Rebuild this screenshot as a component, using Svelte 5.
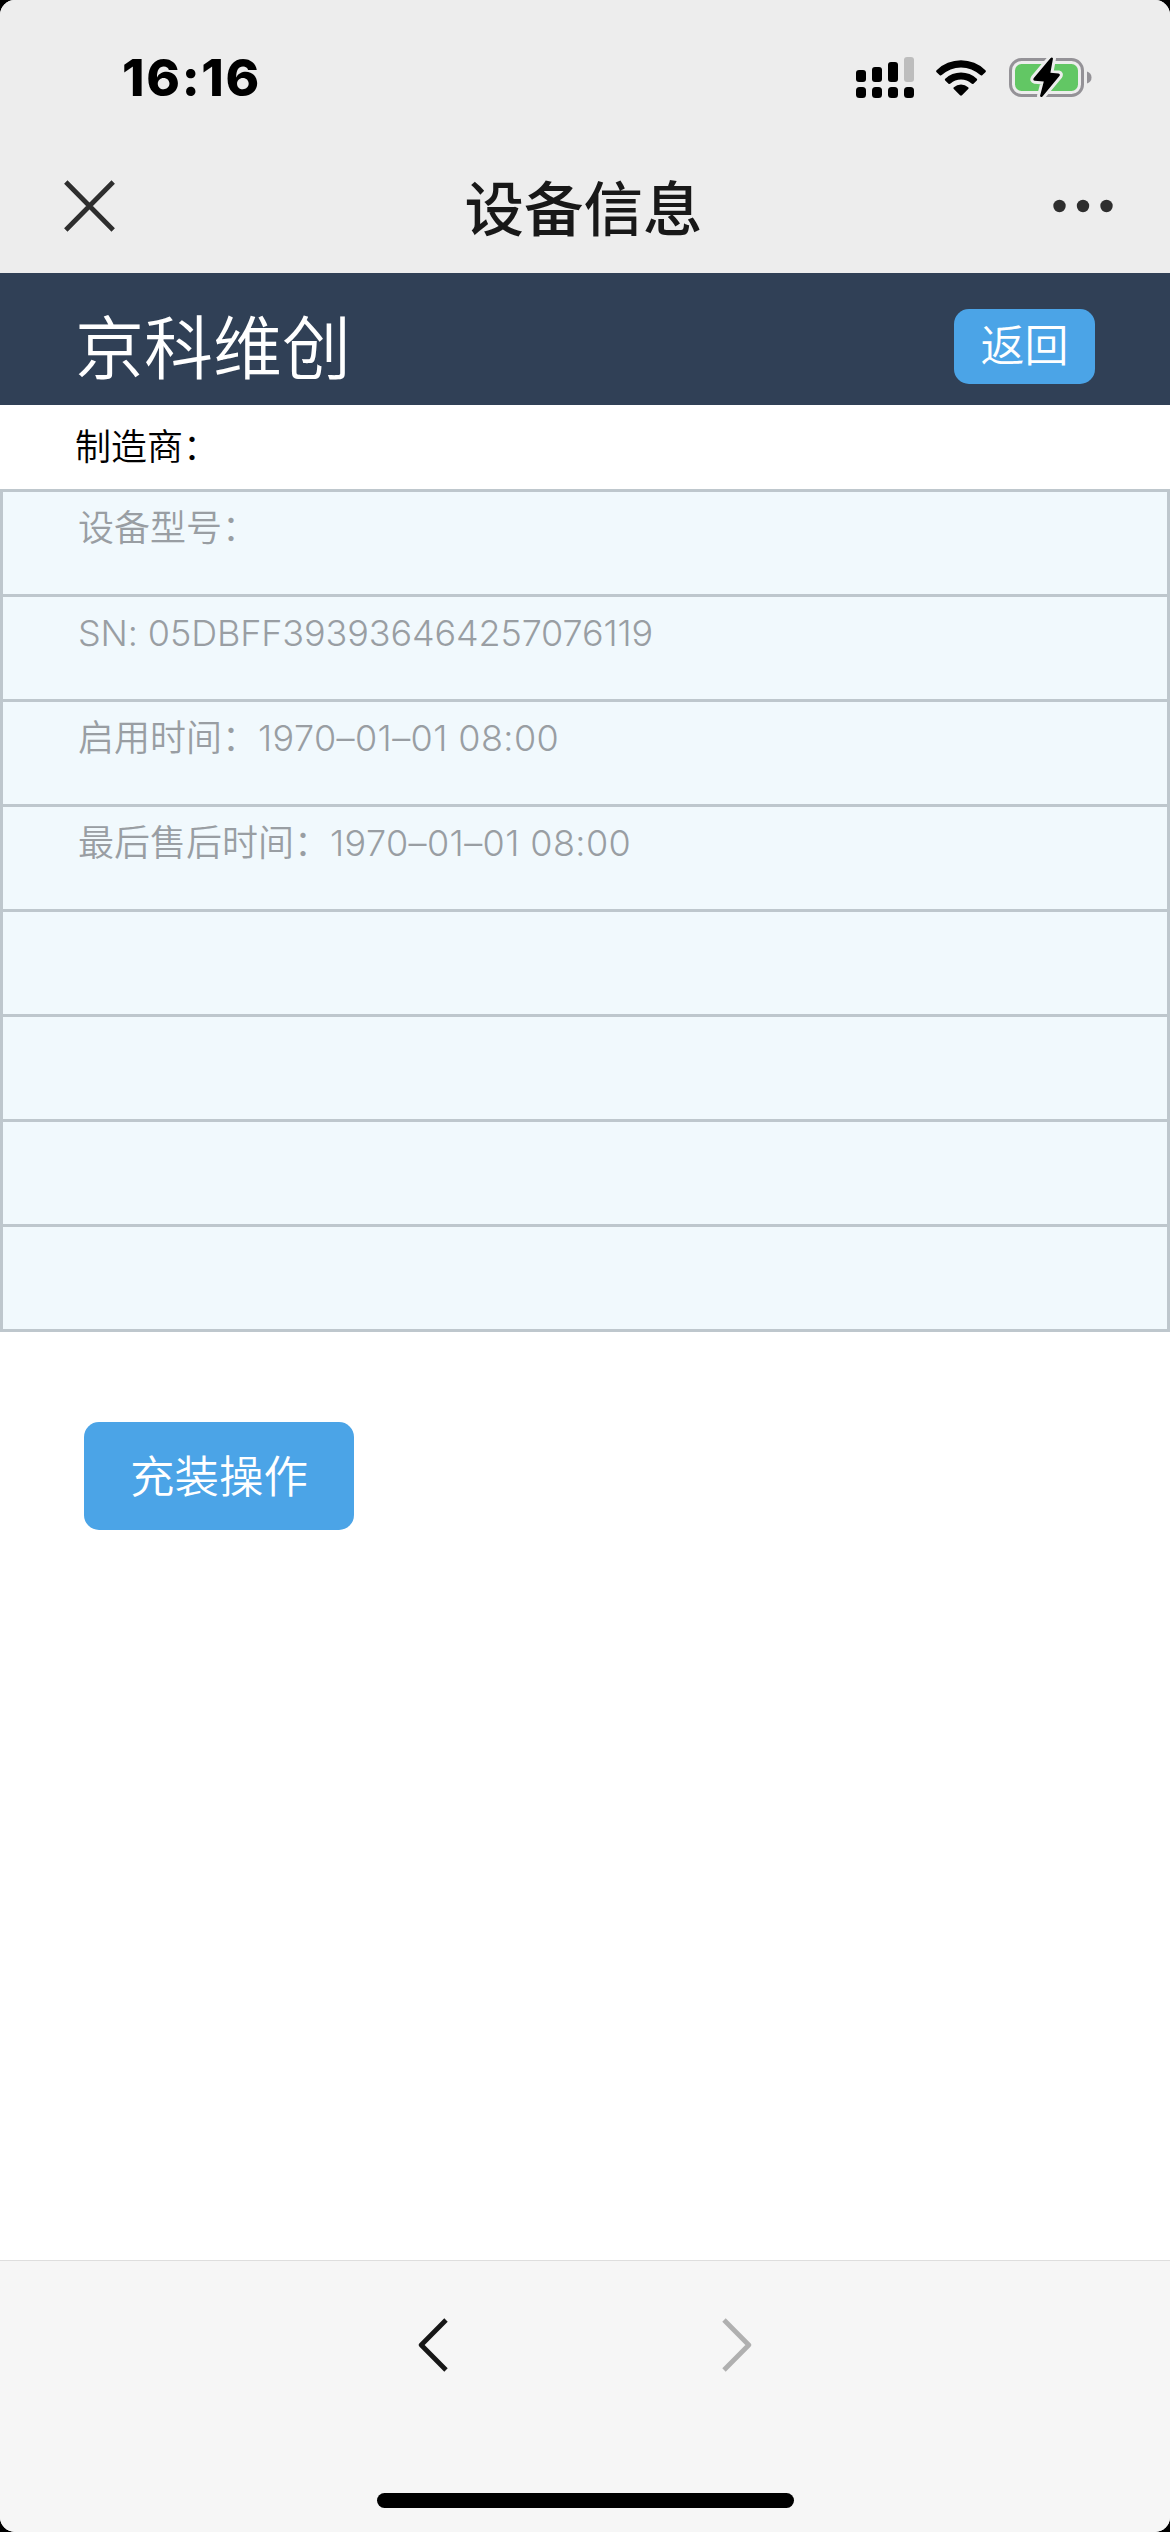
<script lang="ts">
  interface InfoRow {
    label: string;
    value: string;
    kind?: string;
  }

  const time: string = '16:16';
  const title: string = '设备信息';
  const company: string = '京科维创';

  // Rows without a label are kept as blank cells
  const rows: InfoRow[] = [
    { label: '设备型号：', value: '' },
    { label: '', value: 'SN: 05DBFF393936464257076119', kind: 'serial' },
    { label: '启用时间：', value: '1970–01–01 08:00', kind: 'date' },
    { label: '最后售后时间：', value: '1970–01–01 08:00', kind: 'date' },
    { label: '', value: '' },
    { label: '', value: '' },
    { label: '', value: '' },
    { label: '', value: '' }
  ];
</script>

<div class="frame">
  <div class="screen">
    <div class="top">
      <div class="status-bar">
        <span class="time">{time}</span>
        <div class="status-icons">
          <svg class="signal" width="58" height="41" viewBox="0 0 58 41">
            <rect x="0" y="13" width="10" height="12" rx="3" />
            <rect x="16" y="10" width="10" height="15" rx="3" />
            <rect x="32" y="5" width="10" height="20" rx="3" />
            <rect x="48" y="0" width="10" height="25" rx="3" fill="#bdbdbd" />
            <rect x="0" y="30" width="10" height="11" rx="3.5" />
            <rect x="16" y="30" width="10" height="11" rx="3.5" />
            <rect x="32" y="30" width="10" height="11" rx="3.5" />
            <rect x="48" y="30" width="10" height="11" rx="3.5" />
          </svg>
          <svg class="wifi" width="50" height="37" viewBox="0 0 50 37">
            <path d="M0.6 11.2A35 35 0 0 1 49.4 11.2Q50.4 12.2 49.4 13.2L46.2 16.2Q45.3 17 44.3 16.1A28 28 0 0 0 5.7 16.1Q4.7 17 3.8 16.2L0.6 13.2Q-0.4 12.2 0.6 11.2Z" />
            <path d="M9.2 19.7A23 23 0 0 1 40.8 19.7Q41.7 20.7 40.8 21.6L37.5 24.7Q36.5 25.5 35.5 24.6A15.6 15.6 0 0 0 14.5 24.6Q13.5 25.5 12.5 24.7L9.2 21.6Q8.3 20.7 9.2 19.7Z" />
            <path d="M17.9 28.2A11 11 0 0 1 32.1 28.2Q33.1 29 32.2 30L26 36.2Q25 37.1 24 36.2L17.8 30Q16.9 29 17.9 28.2Z" />
          </svg>
          <svg class="battery" width="83" height="43" viewBox="0 0 83 43">
            <rect x="1.5" y="3.5" width="72" height="36" rx="11" fill="none" stroke="#949297" stroke-width="3" />
            <rect x="6" y="8" width="63" height="27" rx="6.5" fill="#62c764" />
            <path d="M78 15.5Q82.5 17 82.5 21.5T78 27.5Z" fill="#949297" />
            <path
              d="M41.4 2.3Q43 .8 44 2.5L41.4 16.8L49.5 17.4Q51.7 18 50.4 20L33.7 40.2Q32 42 31 40L34.8 25.4L25.8 24.8Q23.4 24.3 24.8 22Z"
              stroke="#ededed"
              stroke-width="6"
              stroke-linejoin="round"
            />
            <path d="M41.4 2.3Q43 .8 44 2.5L41.4 16.8L49.5 17.4Q51.7 18 50.4 20L33.7 40.2Q32 42 31 40L34.8 25.4L25.8 24.8Q23.4 24.3 24.8 22Z" />
          </svg>
        </div>
      </div>

      <div class="nav-bar">
        <button class="icon-btn" aria-label="关闭">
          <svg width="51" height="52" viewBox="0 0 51 52" fill="none" stroke="#2e2e2e" stroke-width="4.8">
            <path d="M1.8 2L49.2 50M49.2 2L1.8 50" />
          </svg>
        </button>
        <h1>{title}</h1>
        <button class="icon-btn" aria-label="更多">
          <svg width="60" height="14" viewBox="0 0 60 14" fill="#2e2e2e">
            <circle cx="6.5" cy="7" r="6.2" />
            <circle cx="30" cy="7" r="6.2" />
            <circle cx="53.5" cy="7" r="6.2" />
          </svg>
        </button>
      </div>
    </div>

    <header class="company-bar">
      <span class="company">{company}</span>
      <button class="back-btn">返回</button>
    </header>

    <main>
      <div class="maker">制造商：</div>
      <div class="info-list">
        {#each rows as row}
          <div class="info-row">{row.label}<span class={row.kind}>{row.value}</span></div>
        {/each}
      </div>
      <button class="action-btn">充装操作</button>
    </main>

    <footer class="toolbar">
      <div class="arrows">
        <svg width="30" height="54" viewBox="0 0 30 54" fill="none" stroke="#171717" stroke-width="4.8">
          <path d="M28 2L3.2 27L28 52" stroke-linejoin="round" />
        </svg>
        <svg width="30" height="54" viewBox="0 0 30 54" fill="none" stroke="#b0b0b0" stroke-width="4.8">
          <path d="M2 2L26.8 27L2 52" stroke-linejoin="round" />
        </svg>
      </div>
      <div class="home-indicator"></div>
    </footer>
  </div>
</div>

<style>
  :global(body) {
    margin: 0;
    background: #000;
  }

  .frame {
    width: 1170px;
    height: 2532px;
    background: #000;
    font-family: Inter, 'Noto Sans CJK SC', sans-serif;
  }

  .screen {
    height: 100%;
    display: flex;
    flex-direction: column;
    background: #fff;
    border-radius: 15px;
    overflow: hidden;
  }

  button {
    padding: 0;
    border: none;
    background: none;
    font-family: inherit;
    cursor: pointer;
  }

  svg {
    display: block;
  }

  .top {
    height: 273px;
    flex-shrink: 0;
    background: #ededed;
  }

  .status-bar {
    height: 139px;
    box-sizing: border-box;
    padding: 16px 78px 0 122px;
    display: flex;
    justify-content: space-between;
    align-items: center;
  }

  .time {
    font-size: 51px;
    font-weight: 800;
    line-height: 60px;
    letter-spacing: 1.7px;
  }

  .status-icons {
    display: flex;
    align-items: center;
  }

  .wifi {
    margin-left: 22px;
  }

  .battery {
    margin-left: 23px;
  }

  .nav-bar {
    height: 134px;
    padding: 0 57px 0 64px;
    display: grid;
    grid-template-columns: 60px 1fr 60px;
    align-items: center;
  }

  h1 {
    margin: 0;
    padding: 5px 10px 0 0;
    text-align: center;
    font-size: 59.5px;
    font-weight: 500;
    line-height: 80px;
    color: #181818;
  }

  .company-bar {
    height: 132px;
    flex-shrink: 0;
    box-sizing: border-box;
    padding: 15px 75px 0 75px;
    display: flex;
    justify-content: space-between;
    align-items: center;
    background: #304056;
  }

  .company {
    padding-top: 4px;
    font-size: 69px;
    font-weight: 350;
    line-height: 80px;
    color: #fff;
  }

  .back-btn {
    width: 141px;
    height: 75px;
    padding-bottom: 7px;
    border-radius: 15px;
    background: #4ba4e7;
    color: #fff;
    font-size: 44px;
    font-weight: 350;
  }

  main {
    flex: 1;
  }

  .maker {
    height: 84px;
    padding-left: 75px;
    font-size: 36px;
    font-weight: 350;
    line-height: 84px;
    color: #000;
  }

  .info-list {
    border: 3px solid #bec7cd;
    border-bottom: none;
    background: #f1f9fd;
  }

  .info-row {
    height: 102px;
    padding-left: 75px;
    border-bottom: 3px solid #bec7cd;
    font-size: 36px;
    font-weight: 350;
    line-height: 72px;
    color: #999ea3;
    white-space: nowrap;
  }

  .serial {
    letter-spacing: -0.13px;
  }

  .date {
    letter-spacing: 0.4px;
  }

  .action-btn {
    display: block;
    width: 270px;
    height: 108px;
    margin: 90px 0 0 84px;
    padding-bottom: 6px;
    border-radius: 15px;
    background: #4ba4e7;
    color: #fff;
    font-size: 44.5px;
    font-weight: 350;
  }

  .toolbar {
    height: 271px;
    border-top: 1px solid #dedede;
    background: #f6f6f6;
    display: flex;
    flex-direction: column;
    justify-content: space-between;
    align-items: center;
  }

  .arrows {
    margin-top: 57px;
    display: flex;
    gap: 274px;
  }

  .home-indicator {
    width: 417px;
    height: 15px;
    margin-bottom: 24px;
    border-radius: 8px;
    background: #000;
  }
</style>
